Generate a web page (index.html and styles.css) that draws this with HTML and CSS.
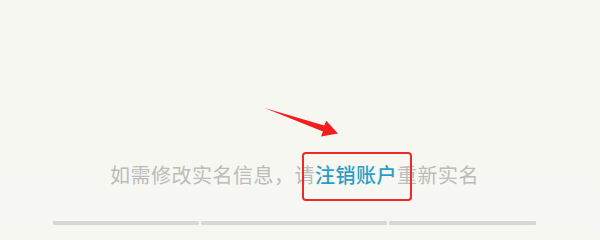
FILE: index.html
```html
<!DOCTYPE html>
<html lang="zh-CN">
<head>
<meta charset="utf-8">
<title>实名信息</title>
<link rel="stylesheet" href="styles.css">
</head>
<body>
<div class="screen">
  <svg class="arrow" width="600" height="233" viewBox="0 0 600 233" aria-hidden="true">
    <polygon points="264.5,108 324.3,125.5 326.2,120.8 338,133.5 321,136.4 323,131.4" fill="#f41d1d"/>
  </svg>
  <p class="notice">如需修改实名信息，请<span class="link">注销账户</span>重新实名</p>
  <div class="tabs">
    <span class="tab tab-a"></span>
    <span class="tab tab-b"></span>
    <span class="tab tab-c"></span>
  </div>
</div>
</body>
</html>
```

FILE: styles.css
```css
html, body {
  margin: 0;
  padding: 0;
  background: #f7f7f2;
}

.screen {
  position: relative;
  width: 600px;
  height: 233px;
  overflow: hidden;
  display: flex;
  flex-direction: column;
  background: linear-gradient(180deg, #f7f7f2 0%, #f7f7f2 70%, #f6f6f4 100%);
}

.arrow {
  position: absolute;
  left: 0;
  top: 0;
}

.notice {
  margin: 163px 0 0 0;
  padding-left: 110px;
  font-family: "Noto Sans CJK SC", "Noto Sans", sans-serif;
  font-size: 20px;
  letter-spacing: 0.5px;
  line-height: 24px;
  color: #bcbcbb;
  white-space: nowrap;
}

.link {
  position: relative;
  color: #2a9fc5;
  font-weight: 500;
}

.link::after {
  content: "";
  position: absolute;
  left: -13px;
  right: -15px;
  top: -8px;
  bottom: -12px;
  border: 2px solid #ec2a2a;
  border-radius: 4px;
}

.tabs {
  display: flex;
  gap: 2px;
  margin: 34px 0 0 53px;
}

.tab {
  height: 4px;
  background: #d7d7d4;
  border-radius: 1px;
}

.tab-a { width: 146px; }
.tab-b { width: 186px; }
.tab-c { width: 147px; }
```
